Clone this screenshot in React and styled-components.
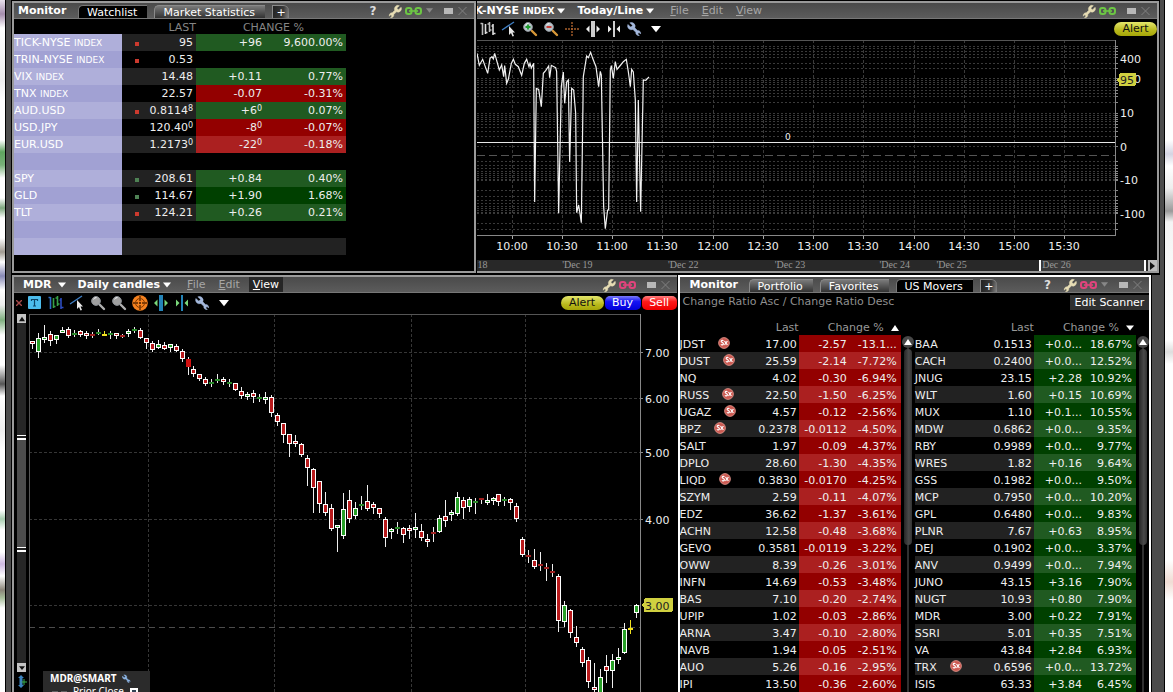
import React, { useState } from "react";
import styled, { createGlobalStyle } from "styled-components";

const GlobalStyle = createGlobalStyle`
  * {
    box-sizing: border-box;
  }
  body {
    margin: 0;
    background: #fff;
    color: #eee;
    font: 11px/14px "DejaVu Sans", Verdana, sans-serif;
  }
  button {
    margin: 0;
    padding: 0;
    border: 0;
    background: none;
    color: inherit;
    font: inherit;
    cursor: pointer;
  }
  svg {
    display: block;
    flex: none;
  }
`;

const Shell = styled.div`
  display: grid;
  grid-template-columns: 5px minmax(0, 1fr) 8px;
  height: 100vh;
  overflow: hidden;
`;

const LeftSliver = styled.div`
  background: linear-gradient(#e8e0ec 0, #a48cac 14px, #fff 28px, #eee 80px, #fff 100px, #fff 140px,
    #5fa45f 152px, #78b078 165px, #fff 178px, #fff 198px, #7da67d 208px, #fff 218px, #fff 238px,
    #a09a90 252px, #fff 262px, #8688b4 276px, #fff 290px, #eee 305px, #7fb07f 320px, #fff 335px,
    #fff 365px, #555 384px, #fff 396px, #eee 430px, #fff 450px, #fff 510px, #a8ceb0 519px,
    #fff 530px, #fff 552px, #cdb8e0 564px, #fff 576px, #8a8478 590px, #a8bf9c 598px, #fff 608px);
`;

const RightSliver = styled.div`
  background: linear-gradient(#fff 0, #fff 140px, #d4d4e2 154px, #fff 166px, #eee 188px, #999 211px,
    #f4f4f4 222px, #fff 340px, #ddd 352px, #fff 364px, #fff 560px, #f0dcd4 582px, #fff 600px);
`;

const Workspace = styled.main`
  display: flex;
  flex-direction: column;
  min-height: 0;
  background: #4c4c4c;
  border: solid #000;
  border-width: 0 1px;
`;

const PanelRow = styled.div`
  display: grid;
  grid-template-columns: ${(props) => props.$columns};
  gap: 1px;
  flex: ${(props) => (props.$fill ? "1" : "none")};
  min-height: 0;
  margin: 0 ${(props) => (props.$fill ? 12 : 4)}px 0 5px;
  padding: ${(props) => (props.$fill ? "0 1px" : "1px 1px 2px")};
  background: #000;
`;

const Panel = styled.section`
  display: flex;
  flex-direction: column;
  min-width: 0;
  min-height: 0;
  overflow: hidden;
  background: #000;
  border: 2px solid ${(props) => (props.$focused ? "#fff" : "#9a9a9a")};
  border-width: ${(props) => props.$edges || "2px"};
`;

const TitleBar = styled.header`
  display: flex;
  align-items: flex-end;
  flex: none;
  height: 16px;
  background: linear-gradient(#4a4a4a, #5c5c5c);
  border-bottom: 1px solid #777;
  white-space: nowrap;
  overflow: hidden;
`;

const Title = styled.h2`
  width: ${(props) => props.$width}px;
  margin: 0;
  padding-left: ${(props) => props.$indent}px;
  font-size: 11px;
  color: #fff;
`;

const Tabs = styled.div`
  display: flex;
  gap: 7px;
  align-items: flex-end;
  margin-bottom: -1px;
`;

const Tab = styled.button`
  height: 14px;
  padding: 0 10px 0 8px;
  border: 1px solid ${(props) => (props.$active ? "#777" : "#8a8a8a")};
  border-width: 1px 0 0 1px;
  border-radius: 5px 0 0 0;
  background: ${(props) => (props.$active ? "#000" : "linear-gradient(#7a7a7a, #2c2c2c)")};
  color: #fff;
  line-height: 14px;
`;

const AddTab = styled(Tab)`
  width: 17px;
  padding: 0;
  border-radius: 0 6px 0 0;
  background: linear-gradient(100deg, #222, #3a3a3a 60%, #888);
`;

const Controls = styled.div`
  display: flex;
  align-items: center;
  height: 15px;
  margin-left: auto;
  padding-right: 7px;
`;

const HelpButton = styled.button`
  margin-right: 12px;
  color: #ddd;
  font-size: 12px;
  font-weight: bold;
`;

const Spacer = styled.span`
  width: ${(props) => props.$size}px;
`;

const MenuButton = styled.button`
  display: flex;
  align-items: center;
  gap: 3px;
  height: 15px;
  padding-top: 1px;
  margin-right: 12px;
  color: #fff;
  font-weight: bold;
`;

const LeadMenu = styled(MenuButton)`
  margin-left: ${(props) => props.$shift}px;
`;

const SmallCaps = styled.small`
  font-size: 9px;
`;

const MenuItem = styled.button`
  height: 15px;
  padding: 1px 4px 0;
  margin-right: 5px;
  background: ${(props) => (props.$open ? "#262626" : "none")};
  color: ${(props) => (props.$open ? "#fff" : "#a6a6a6")};
`;

const Toolbar = styled.div`
  display: flex;
  align-items: center;
  flex: none;
  height: 21px;
  padding-bottom: 2px;
`;

const ToolButton = styled.button`
  display: flex;
  justify-content: center;
  width: ${(props) => props.$width || 21}px;
`;

const OrderButtons = styled.div`
  display: flex;
  gap: 1px;
  margin-left: auto;
`;

const orderColors = {
  alert: ["linear-gradient(#e4e66c, #b9b91c 60%, #a5a508)", "#111"],
  buy: ["linear-gradient(#7c7cf8, #1414f4 40%, #0000d8)", "#fff"],
  sell: ["linear-gradient(#ff8080, #fa1a1a 40%, #f00000)", "#fff"],
};

const OrderButton = styled.button`
  width: ${(props) => props.$width}px;
  height: 14px;
  border-radius: ${(props) => (props.$kind === "alert" ? 7 : 5)}px;
  background: ${(props) => orderColors[props.$kind][0]};
  color: ${(props) => orderColors[props.$kind][1]};
  line-height: 13px;
`;

/* watchlist */

const WatchTable = styled.table`
  width: 332px;
  margin-bottom: 16px;
  border-collapse: collapse;
  table-layout: fixed;

  th {
    height: 15px;
    padding: 2px 0 0;
    color: #858585;
    font-weight: normal;
    line-height: 13px;
    text-align: right;
  }
  th:last-child {
    padding-right: 42px;
  }
  td {
    height: 17px;
    padding: 1px 3px 0 0;
    line-height: 16px;
    text-align: right;
    white-space: nowrap;
  }
`;

const WatchRow = styled.tr`
  background: ${(props) => (props.$odd ? "#000" : "#222")};
`;

const WatchName = styled.td`
  && {
    background: ${(props) => (props.$odd ? "#a1a1d3" : "#afafda")};
    color: #fff;
    text-align: left;
  }
`;

const tones = {
  up: ["#205a21", "#004000"],
  down: ["#ab2020", "#930000"],
};

const MoveCell = styled.td`
  background: ${(props) => (props.$tone ? tones[props.$tone][props.$odd ? 1 : 0] : "none")};
`;

const Tick = styled.span`
  float: left;
  width: 4px;
  height: 4px;
  margin: 7px 0 0 13px;
  background: ${(props) => (props.$up ? "#4e8254" : "#cc3a2e")};
`;

const Pip = styled.sup`
  font-size: 8px;
  line-height: 0;
  vertical-align: 3px;
`;

/* charts */

const ChartBody = styled.div`
  display: flex;
  flex: ${(props) => (props.$fill ? "1" : "none")};
  min-height: 0;
`;

const PlotWrap = styled.div`
  position: relative;
  flex: 1;
  min-width: 0;
`;

const Plot = styled.svg`
  width: 100%;
  height: ${(props) => props.$height};
  font: 11px "DejaVu Sans", Verdana, sans-serif;
  fill: #eee;
  shape-rendering: crispEdges;
`;

const Axis = styled(Plot)`
  width: ${(props) => props.$width}px;
`;

const Timeline = styled.div`
  display: grid;
  grid-template-columns: 85fr 106fr 107fr 105fr 57fr 103fr 105fr 4px 9px;
  flex: none;
  height: 11px;
  background: #282828;
  color: #999;
  font: 10px/10px "Liberation Serif", serif;
  white-space: nowrap;
`;

const TimelineRange = styled.div`
  padding-left: 1px;
  background: #3a3a3a;
  border-left: 2px solid #fff;
`;

const TimelineHandle = styled.button`
  border-left: 2px solid #fff;
`;

const TimelineNext = styled.button`
  display: flex;
  align-items: center;
  justify-content: center;
  background: #bbb;
`;

const RangeColumn = styled.div`
  display: flex;
  flex-direction: column;
  align-items: center;
  width: 15px;
`;

const RangeTrack = styled.div`
  display: flex;
  flex-direction: column;
  flex: 1;
  width: 9px;
  background: #272727;
`;

const RangeEnd = styled.button`
  display: flex;
  align-items: center;
  justify-content: center;
  width: 9px;
  height: 9px;
  background: #c4c4c4;
`;

const RangeGap = styled.div`
  flex: ${(props) => props.$grow};
  background: ${(props) => (props.$selected ? "#4c4c4c" : "none")};
`;

const RangeHandle = styled.button`
  height: 5px;
  border: solid #fff;
  border-width: 1px 0 2px;
  background: #222;
`;

const Legend = styled.div`
  position: absolute;
  left: 14px;
  bottom: 0;
  width: 107px;
  height: 21px;
  overflow: hidden;
  padding: 1px 7px;
  background: #2b2b2b;
  color: #fff;
  font: 10px/13px "Noto Sans", sans-serif;
  white-space: nowrap;
`;

const LegendLine = styled.div`
  display: flex;
  align-items: center;
  gap: 6px;
  font-weight: ${(props) => (props.$strong ? "bold" : "normal")};
`;

const LegendCheck = styled.input`
  appearance: none;
  width: 8px;
  height: 8px;
  margin: 0;
  border: 2px solid #fff;
  background: #345;
`;

/* movers */

const QueryBar = styled.div`
  display: flex;
  justify-content: space-between;
  flex: none;
  height: 27px;
  padding-left: 3px;
  color: #8f8f8f;
  line-height: 17px;
`;

const EditScanner = styled.button`
  width: 79px;
  height: 15px;
  margin-top: 2px;
  background: #303030;
  color: #fff;
  line-height: 15px;
`;

const MoversBody = styled.div`
  display: grid;
  grid-template-columns: minmax(0, 1fr) 14px minmax(0, 1fr) 13px;
  min-height: 0;
`;

const MoversTable = styled.table`
  width: 100%;
  align-self: start;
  border-collapse: collapse;
  table-layout: fixed;

  th {
    height: 15px;
    padding: 1px 0 0;
    color: #999;
    font-weight: normal;
    line-height: 14px;
    text-align: right;
    white-space: nowrap;
  }
  td {
    height: 17px;
    padding: 2px 1px 0 0;
    line-height: 15px;
    text-align: right;
    white-space: nowrap;
  }
  td:nth-child(2) {
    padding-right: 2px;
  }
  td:last-child {
    padding-right: 4px;
  }
`;

const MoversRow = styled.tr`
  background: ${(props) => (props.$odd ? "#222" : "#000")};
`;

const SortHead = styled.span`
  display: flex;
  justify-content: flex-end;
  align-items: center;
  gap: 7px;
  padding-right: 2px;
`;

const SymbolCell = styled.span`
  display: flex;
  align-items: flex-start;
  gap: 13px;
`;

const ScrollColumn = styled.div`
  display: flex;
  flex-direction: column;
  align-items: center;
  padding-top: 16px;
`;

const ScrollUp = styled.button`
  display: flex;
  align-items: center;
  justify-content: center;
  flex: none;
  width: 12px;
  height: 12px;
  border-radius: 6px;
  background: #484848;
`;

const ScrollTrack = styled.div`
  flex: 1;
  width: 8px;
  background: linear-gradient(90deg, transparent 3px, #303030 3px, #303030 5px, transparent 5px);
`;

const ScrollThumb = styled.div`
  height: ${(props) => props.$size}%;
  margin-top: 1px;
  border-radius: 4px;
  background: linear-gradient(90deg, #262626, #4a4a4a 60%, #333);
`;

/* icons */

const Triangle = ({ dir = "down", size = 8, color = "#fff" }) => {
  const points = {
    down: "0,1.5 8,1.5 4,6.5",
    up: "0,7 8,7 4,1",
    right: "2,0 7,4 2,8",
  };
  return (
    <svg width={size} height={size} viewBox="0 0 8 8" aria-hidden="true">
      <polygon points={points[dir]} fill={color} />
    </svg>
  );
};

const wrenchPath =
  "M14.7 6.3a1 1 0 0 0 0 1.4l1.6 1.6a1 1 0 0 0 1.4 0l3.77-3.77a6 6 0 0 1-7.94 7.94l-4.6 4.6 a4.6 4.6 0 0 1-5.6 5.2l2.6-2.6-2.2-2.2-2.4 2.4a4.6 4.6 0 0 1 5-5.8l4.2-4.2a6 6 0 0 1 7.94-7.94z";

const WrenchIcon = ({ color = "#e6dcb4", size = 15, flip }) => (
  <svg width={size} height={size} viewBox="-1 0 24 24" aria-hidden="true">
    <path
      d={wrenchPath}
      fill={color}
      stroke={color}
      strokeWidth="0.8"
      transform={flip ? "translate(22 0) scale(-1 1)" : undefined}
    />
  </svg>
);

const LinkIcon = ({ color }) => (
  <svg width="17" height="8" viewBox="0 0 17 8" fill="none" stroke={color} aria-hidden="true">
    <rect x="1" y="1" width="5.5" height="6" rx="2.2" strokeWidth="2" />
    <rect x="10.5" y="1" width="5.5" height="6" rx="2.2" strokeWidth="2" />
    <path d="M4 4H13" strokeWidth="1.6" />
  </svg>
);

const BarsIcon = ({ colors }) => (
  <svg width="16" height="16" viewBox="0 0 16 16" fill="none" strokeWidth="1.6" aria-hidden="true">
    <path d="M2.5 2V14M0.5 2.5H2.5" stroke={colors[0]} />
    <path d="M5.5 3V13M5.5 11.5H7.5" stroke={colors[1]} />
    <path d="M9.5 1V11M7.5 3H9.5M9.5 9H11.5" stroke={colors[2]} />
    <path d="M13 3V14M11.5 5H13M13 12.5H15.5" stroke={colors[3]} />
  </svg>
);

const TrendIcon = () => (
  <svg width="16" height="16" viewBox="0 0 16 16" aria-hidden="true">
    <path d="M1 9L13 1" stroke="#3f7fc4" strokeWidth="1.4" />
    <path d="M8 5V14L10 12L11.5 15.5L13 15L11.5 11.5H14Z" fill="#e8e8e8" />
  </svg>
);

const LensIcon = ({ sign, lens = "#b8c4cc", signColor, handle = "#d89838" }) => (
  <svg width="16" height="16" viewBox="0 0 16 16" aria-hidden="true">
    <path d="M8.5 8.5L14 14" stroke={handle} strokeWidth="2.4" strokeLinecap="round" />
    <circle cx="6" cy="6" r="4.4" fill={lens} stroke="#8a8f94" />
    <path d="M3.5 4.2A3.4 3.4 0 0 1 6.5 2.6" stroke="#fff" fill="none" />
    {sign && (
      <path d={sign === "plus" ? "M6 3.5V8.5M3.5 6H8.5" : "M3.5 6H8.5"} stroke={signColor} strokeWidth="1.8" />
    )}
  </svg>
);

const CrosshairIcon = ({ filled }) => (
  <svg width="16" height="16" viewBox="0 0 16 16" fill="none" aria-hidden="true">
    {filled && <circle cx="8" cy="8" r="7.8" fill="#f58220" />}
    {filled && <circle cx="8" cy="8" r="4.5" stroke="#7a3600" />}
    <path d="M8 1V15M1 8H15" stroke={filled ? "#5e2a00" : "#a8602c"} strokeWidth="1.4" strokeDasharray="2 1" />
  </svg>
);

const SplitIcon = ({ bar, arrow, inward }) => (
  <svg width="16" height="16" viewBox="0 0 16 16" aria-hidden="true">
    <rect x={inward ? 7 : 6} y="0" width={inward ? 2 : 4} height="16" fill={bar} />
    <path
      d={inward ? "M2 4.5L5.5 8L2 11.5ZM14 4.5L10.5 8L14 11.5Z" : "M4.5 4.5L1 8L4.5 11.5ZM11.5 4.5L15 8L11.5 11.5Z"}
      fill={arrow}
    />
  </svg>
);

const TextIcon = () => (
  <svg width="13" height="13" viewBox="0 0 13 13" aria-hidden="true">
    <rect width="13" height="13" rx="1" fill="#4cbcec" />
    <path d="M3.5 5V3.5H9.5V5M6.5 3.5V10M5 10H8" fill="none" stroke="#0c4468" strokeWidth="1.2" />
  </svg>
);

const ShortBadge = () => (
  <svg width="12" height="12" viewBox="0 0 12 12" aria-label="Short sale restricted">
    <circle cx="6" cy="6" r="5.4" fill="#cc5a52" stroke="#e89a90" strokeWidth="0.8" />
    <path
      d="M5.4 3.8C4.6 3 3 3.4 3.2 4.5C3.4 5.6 5.4 5.4 5.4 6.7C5.4 8 3.6 8.2 2.9 7.4M6.5 4L9.4 8M9.4 4L6.5 8"
      fill="none"
      stroke="#fff"
      strokeWidth="1.2"
    />
  </svg>
);

const WindowControls = ({ link, help, menu }) => (
  <Controls>
    {help && <HelpButton aria-label="Help">?</HelpButton>}
    <button aria-label="Configure">
      <WrenchIcon size={14} />
    </button>
    <Spacer $size={3} />
    <button aria-label="Link group">
      <LinkIcon color={link} />
    </button>
    {menu && <Spacer $size={4} />}
    {menu && <Triangle color="#888" size={7} />}
    <Spacer $size={11} />
    <button aria-label="Restore">
      <svg width="9" height="6">
        <rect width="9" height="6" fill="#b8b8b8" />
      </svg>
    </button>
    <Spacer $size={5} />
    <button aria-label="Close">
      <svg width="9" height="8" viewBox="0 0 9 8">
        <path d="M0.5 0L8.5 8M8.5 0L0.5 8" stroke="#808080" />
      </svg>
    </button>
  </Controls>
);

const MenuBar = ({ open }) =>
  ["File", "Edit", "View"].map((label) => (
    <MenuItem key={label} $open={open === label}>
      <u>{label[0]}</u>
      {label.slice(1)}
    </MenuItem>
  ));

const watchlist = [
  { name: "TICK-NYSE", index: true, tick: "down", last: "95", change: "+96", pct: "9,600.00%", tone: "up" },
  { name: "TRIN-NYSE", index: true, tick: "down", last: "0.53" },
  { name: "VIX", index: true, last: "14.48", change: "+0.11", pct: "0.77%", tone: "up" },
  { name: "TNX", index: true, last: "22.57", change: "-0.07", pct: "-0.31%", tone: "down" },
  { name: "AUD.USD", tick: "down", last: "0.8114", lastPip: "8", change: "+6", pip: "0", pct: "0.07%", tone: "up" },
  { name: "USD.JPY", last: "120.40", lastPip: "0", change: "-8", pip: "0", pct: "-0.07%", tone: "down" },
  { name: "EUR.USD", last: "1.2173", lastPip: "0", change: "-22", pip: "0", pct: "-0.18%", tone: "down" },
  {},
  { name: "SPY", tick: "up", last: "208.61", change: "+0.84", pct: "0.40%", tone: "up" },
  { name: "GLD", tick: "up", last: "114.67", change: "+1.90", pct: "1.68%", tone: "up" },
  { name: "TLT", tick: "down", last: "124.21", change: "+0.26", pct: "0.21%", tone: "up" },
  {},
  {},
];

// symbol, last, change, percent, short restricted
const losers = [
  ["JDST", "17.00", "-2.57", "-13.1...", true],
  ["DUST", "25.59", "-2.14", "-7.72%", true],
  ["NQ", "4.02", "-0.30", "-6.94%"],
  ["RUSS", "22.50", "-1.50", "-6.25%", true],
  ["UGAZ", "4.57", "-0.12", "-2.56%", true],
  ["BPZ", "0.2378", "-0.0112", "-4.50%", true],
  ["SALT", "1.97", "-0.09", "-4.37%"],
  ["DPLO", "28.60", "-1.30", "-4.35%"],
  ["LIQD", "0.3830", "-0.0170", "-4.25%", true],
  ["SZYM", "2.59", "-0.11", "-4.07%"],
  ["EDZ", "36.62", "-1.37", "-3.61%"],
  ["ACHN", "12.58", "-0.48", "-3.68%"],
  ["GEVO", "0.3581", "-0.0119", "-3.22%"],
  ["OWW", "8.39", "-0.26", "-3.01%"],
  ["INFN", "14.69", "-0.53", "-3.48%"],
  ["BAS", "7.10", "-0.20", "-2.74%"],
  ["UPIP", "1.02", "-0.03", "-2.86%"],
  ["ARNA", "3.47", "-0.10", "-2.80%"],
  ["NAVB", "1.94", "-0.05", "-2.51%"],
  ["AUO", "5.26", "-0.16", "-2.95%"],
  ["IPI", "13.50", "-0.36", "-2.60%"],
];

const gainers = [
  ["BAA", "0.1513", "+0.0...", "18.67%"],
  ["CACH", "0.2400", "+0.0...", "12.52%"],
  ["JNUG", "23.15", "+2.28", "10.92%"],
  ["WLT", "1.60", "+0.15", "10.69%"],
  ["MUX", "1.10", "+0.1...", "10.55%"],
  ["MDW", "0.6862", "+0.0...", "9.35%"],
  ["RBY", "0.9989", "+0.0...", "9.77%"],
  ["WRES", "1.82", "+0.16", "9.64%"],
  ["GSS", "0.1982", "+0.0...", "9.50%"],
  ["MCP", "0.7950", "+0.0...", "10.20%"],
  ["GPL", "0.6480", "+0.0...", "9.83%"],
  ["PLNR", "7.67", "+0.63", "8.95%"],
  ["DEJ", "0.1902", "+0.0...", "3.37%"],
  ["ANV", "0.9499", "+0.0...", "7.94%"],
  ["JUNO", "43.15", "+3.16", "7.90%"],
  ["NUGT", "10.93", "+0.80", "7.90%"],
  ["MDR", "3.00", "+0.22", "7.91%"],
  ["SSRI", "5.01", "+0.35", "7.51%"],
  ["VA", "43.84", "+2.84", "6.93%"],
  ["TRX", "0.6596", "+0.0...", "13.72%", true],
  ["ISIS", "63.33", "+3.84", "6.45%"],
];

// tick index line, three units to a pixel
const tickLine =
  "0,40 7,76 17,58 32,100 39,55 45,50 49,57 53,40 67,90 74,75 80,110 83,77 89,130 94,118 103,70 109,58 115,73 124,80 134,106 142,70 149,58 156,80 159,70 163,84 170,70 173,486 178,145 185,148 193,200 199,100 206,92 215,78 218,113 223,76 236,83 239,95 245,520 253,140 259,96 263,190 269,126 274,120 278,366 284,145 290,150 296,220 299,518 305,495 313,548 319,110 329,48 334,53 341,37 347,55 357,80 365,140 370,94 373,105 380,500 385,566 392,510 395,510 400,90 403,77 409,115 415,65 420,88 431,75 439,65 448,58 454,95 460,140 464,88 469,96 475,180 479,486 484,180 491,515 499,120 506,121 516,111";

const tickLevels = [
  6, 8, 11, 14, 17, 23, 28, 38, 40, 42, 44, 47, 50, 53, 56, 62, 73, 75, 77, 79, 81, 84, 87, 91, 96, 106,
  121, 125, 128, 131, 133, 135, 137, 139, 140, 150, 156, 160, 163, 166, 168, 170, 172, 173, 183, 189,
];

const hours = [
  ["10:00", 35],
  ["10:30", 85],
  ["11:00", 135],
  ["11:30", 185],
  ["12:00", 236],
  ["12:30", 286],
  ["13:00", 336],
  ["13:30", 386],
  ["14:00", 437],
  ["14:30", 487],
  ["15:00", 537],
  ["15:30", 587],
];

// kind, wick top, body top, body bottom, wick bottom
// r/g are hollow bodies, R/G/Y are dashes, F is a solid fall
const candles = [
  ["r", 214, 214, 220, 238], ["g", 190, 205, 245, 263], ["g", 166, 200, 208, 218], ["r", 184, 193, 212, 227],
  ["g", 196, 196, 209, 223], ["g", 172, 179, 185, 190], ["r", 172, 178, 197, 203], ["G", 181, 188, 194, 200],
  ["r", 180, 184, 194, 200], ["r", 184, 190, 197, 208], ["R", 185, 192, 198, 203], ["G", 178, 185, 191, 196],
  ["Y", 184, 191, 197, 198], ["G", 184, 188, 194, 208], ["r", 190, 190, 197, 208], ["R", 192, 195, 201, 204],
  ["g", 178, 184, 193, 200], ["G", 172, 177, 183, 188], ["r", 175, 181, 204, 208], ["r", 205, 205, 220, 238],
  ["r", 214, 220, 240, 245], ["g", 211, 223, 233, 236], ["r", 217, 226, 236, 241], ["g", 223, 223, 235, 245],
  ["r", 222, 229, 242, 245], ["r", 238, 244, 266, 275], ["F", 262, 268, 290, 315], ["r", 289, 298, 311, 322],
  ["r", 313, 313, 326, 332], ["r", 322, 328, 341, 347], ["G", 328, 337, 343, 350], ["G", 312, 326, 332, 338],
  ["r", 320, 328, 335, 344], ["G", 328, 337, 343, 352], ["r", 340, 340, 359, 362], ["r", 350, 364, 377, 386],
  ["g", 365, 371, 376, 389], ["r", 361, 370, 380, 398], ["G", 373, 381, 387, 395], ["g", 367, 382, 391, 402],
  ["r", 376, 382, 428, 440], ["r", 430, 436, 455, 467], ["r", 460, 460, 494, 518], ["r", 493, 493, 521, 560],
  ["r", 496, 514, 520, 532], ["r", 520, 523, 556, 560], ["r", 556, 565, 594, 648], ["r", 593, 598, 653, 728],
  ["r", 632, 632, 701, 728], ["r", 666, 703, 728, 737], ["r", 702, 715, 776, 782], ["g", 765, 765, 773, 845],
  ["g", 670, 718, 797, 806], ["r", 660, 691, 746, 760], ["g", 697, 715, 737, 746], ["G", 678, 701, 707, 720],
  ["r", 645, 694, 718, 722], ["r", 697, 702, 715, 733], ["r", 715, 715, 731, 743], ["r", 742, 748, 805, 830],
  ["g", 773, 778, 785, 808], ["G", 757, 771, 777, 793], ["r", 772, 775, 794, 818], ["r", 766, 775, 781, 808],
  ["g", 730, 772, 781, 805], ["r", 763, 784, 805, 814], ["r", 793, 806, 817, 830], ["R", 770, 785, 791, 815],
  ["g", 736, 745, 787, 790], ["r", 690, 739, 754, 770], ["g", 721, 727, 736, 752], ["g", 667, 682, 733, 737],
  ["r", 682, 691, 715, 746], ["g", 680, 688, 712, 725], ["G", 685, 693, 699, 731], ["R", 684, 684, 690, 702],
  ["g", 672, 689, 695, 704], ["g", 680, 685, 692, 704], ["r", 673, 673, 695, 707], ["G", 680, 687, 693, 707],
  ["r", 684, 686, 700, 721], ["r", 700, 709, 746, 757], ["r", 802, 808, 854, 860], ["R", 841, 855, 861, 878],
  ["r", 837, 871, 890, 896], ["R", 847, 882, 888, 902], ["R", 880, 891, 897, 932], ["R", 883, 903, 909, 920],
  ["r", 912, 919, 1052, 1085], ["g", 994, 1006, 1057, 1070], ["r", 1016, 1021, 1090, 1103],
  ["r", 1069, 1102, 1120, 1130], ["r", 1132, 1138, 1180, 1192], ["r", 1160, 1171, 1237, 1253],
  ["r", 1180, 1252, 1261, 1280], ["g", 1198, 1222, 1280, 1280], ["r", 1156, 1189, 1204, 1240],
  ["g", 1153, 1171, 1204, 1253], ["g", 1135, 1160, 1168, 1183], ["g", 1060, 1078, 1150, 1153],
  ["Y", 1050, 1074, 1080, 1093], ["g", 1002, 1006, 1028, 1045],
];

const candleColors = { r: "#b81a1c", g: "#28a028", R: "#a02020", G: "#2a8a2a", Y: "#f0e020", F: "#d01010" };

const toY = (v) => Math.round(v / 3) - 44;

function Candle({ i, data }) {
  const [kind, high, top, bottom, low] = data;
  const x = 3 + i * 6 - (i > 26 ? 1 : 0) - (i > 77 ? 1 : 0);
  const y = toY(top);
  const hollow = kind === "r" || kind === "g";
  const height = Math.max(toY(bottom) - y, hollow ? 3 : 2);
  const color = candleColors[kind];
  return (
    <g>
      <rect x={x} y={toY(high)} width="1" height={toY(low) - toY(high)} fill={kind === "Y" ? color : "#eee"} />
      <rect x={x - 2} y={y} width="5" height={height} fill={hollow ? "#fff" : color} />
      {hollow && <rect x={x - 1} y={y + 1} width="3" height={height - 2} fill={color} />}
    </g>
  );
}

function WatchlistPanel() {
  const [tab, setTab] = useState("Watchlist");
  return (
    <Panel>
      <TitleBar>
        <Title $width={64} $indent={4}>Monitor</Title>
        <Tabs>
          {["Watchlist", "Market Statistics"].map((name) => (
            <Tab key={name} $active={tab === name} onClick={() => setTab(name)}>{name}</Tab>
          ))}
          <AddTab aria-label="Add tab">+</AddTab>
        </Tabs>
        <WindowControls link="#6cc644" help menu />
      </TitleBar>
      <WatchTable>
        <colgroup>
          <col width="108" />
          <col width="74" />
          <col width="69" />
          <col width="81" />
        </colgroup>
        <thead>
          <tr>
            <th />
            <th>LAST</th>
            <th colSpan="2">CHANGE %</th>
          </tr>
        </thead>
        <tbody>
          {watchlist.map((row, i) => {
            const odd = i % 2 === 1;
            return (
              <WatchRow key={i} $odd={odd}>
                <WatchName $odd={odd}>
                  {row.name} {row.index && <SmallCaps>INDEX</SmallCaps>}
                </WatchName>
                <td>
                  {row.tick && <Tick $up={row.tick === "up"} />}
                  {row.last}
                  {row.lastPip && <Pip>{row.lastPip}</Pip>}
                </td>
                <MoveCell $tone={row.tone} $odd={odd}>
                  {row.change}
                  {row.pip && <Pip>{row.pip}</Pip>}
                </MoveCell>
                <MoveCell $tone={row.tone} $odd={odd}>{row.pct}</MoveCell>
              </WatchRow>
            );
          })}
        </tbody>
      </WatchTable>
    </Panel>
  );
}

function TickPanel() {
  return (
    <Panel $edges="2px 2px 2px 0">
      <TitleBar>
        <LeadMenu $shift={-3}>
          <span>K-NYSE <SmallCaps>INDEX</SmallCaps></span>
          <Triangle />
        </LeadMenu>
        <MenuButton>
          Today/Line
          <Triangle />
        </MenuButton>
        <MenuBar />
        <WindowControls link="#6cc644" />
      </TitleBar>
      <Toolbar>
        <ToolButton aria-label="Bars"><BarsIcon colors={["#bbb", "#ddd", "#bbb", "#ddd"]} /></ToolButton>
        <ToolButton aria-label="Trendline"><TrendIcon /></ToolButton>
        <ToolButton aria-label="Zoom in"><LensIcon sign="plus" signColor="#1c9c2c" /></ToolButton>
        <ToolButton aria-label="Zoom out"><LensIcon sign="minus" signColor="#c83028" /></ToolButton>
        <ToolButton aria-label="Crosshair"><CrosshairIcon /></ToolButton>
        <ToolButton aria-label="Widen"><SplitIcon bar="#ccc" arrow="#eee" /></ToolButton>
        <ToolButton aria-label="Narrow"><SplitIcon bar="#ccc" arrow="#eee" inward /></ToolButton>
        <ToolButton aria-label="Settings"><WrenchIcon color="#a4b8dc" flip /></ToolButton>
        <ToolButton aria-label="More"><Triangle size={10} dir="down" /></ToolButton>
        <OrderButtons>
          <OrderButton $kind="alert" $width={43}>Alert</OrderButton>
        </OrderButtons>
      </Toolbar>
      <ChartBody>
        <PlotWrap>
          <Plot $height="220px">
            {tickLevels.map((y) => (
              <line key={y} x1="0" x2="100%" y1={y + 0.5} y2={y + 0.5} stroke="#3a3a3a" strokeDasharray="2 2" />
            ))}
            {hours.map(([label, x]) => (
              <g key={label}>
                <line x1={x + 0.5} x2={x + 0.5} y1="0" y2="195" stroke="#3a3a3a" strokeDasharray="3 2" />
                <line x1={x + 0.5} x2={x + 0.5} y1="195" y2="199" stroke="#aaa" />
                <text x={x} y="210" textAnchor="middle">{label}</text>
              </g>
            ))}
            <line x1="0" x2="100%" y1="0.5" y2="0.5" stroke="#555" />
            <line x1="0" x2="100%" y1="115.5" y2="115.5" stroke="#555" strokeDasharray="8 4" />
            <line x1="0" x2="100%" y1="102.5" y2="102.5" stroke="#e8e8e8" />
            <line x1="0" x2="100%" y1="195.5" y2="195.5" stroke="#888" />
            <text x="308" y="100" fontSize="9">0</text>
            <polyline
              points={tickLine}
              transform="scale(0.3333)"
              fill="none"
              stroke="#f2f2f2"
              strokeWidth="3.6"
              shapeRendering="auto"
            />
          </Plot>
        </PlotWrap>
        <Axis $width={42} $height="220px">
          <line x1="0.5" x2="0.5" y1="0" y2="196" stroke="#888" />
          {tickLevels.map((y) => (
            <line key={y} x1="0" x2="3" y1={y + 0.5} y2={y + 0.5} stroke="#888" />
          ))}
          {[["400", 23], ["100", 43], ["10", 77], ["0", 111], ["-10", 144], ["-100", 178]].map(([label, y]) => (
            <text key={label} x="5" y={y}>{label}</text>
          ))}
          <path d="M1 40L4 37V35Q4 33 6 33H19Q21 33 21 35V44Q21 46 19 46H6Q4 46 4 44V43Z" fill="#d0d040" />
          <text x="5" y="44" fill="#222">95</text>
        </Axis>
      </ChartBody>
      <Timeline>
        <span>18</span>
        <span>'Dec 19</span>
        <span>'Dec 22</span>
        <span>'Dec 23</span>
        <span>'Dec 24</span>
        <span>'Dec 25</span>
        <TimelineRange>Dec 26</TimelineRange>
        <TimelineHandle aria-label="Range end" />
        <TimelineNext aria-label="Scroll right"><Triangle dir="right" color="#111" /></TimelineNext>
      </Timeline>
    </Panel>
  );
}

function CandlePanel() {
  return (
    <Panel $edges="2px 0 0 2px">
      <TitleBar>
        <LeadMenu $shift={9}>
          MDR
          <Spacer />
          <Triangle />
        </LeadMenu>
        <MenuButton>
          Daily candles
          <Triangle />
        </MenuButton>
        <MenuBar open="View" />
        <WindowControls link="#e0447c" />
      </TitleBar>
      <Toolbar>
        <ToolButton aria-label="Close toolbar" $width={10}>
          <svg width="6" height="6" viewBox="0 0 6 6">
            <path d="M0 0L6 6M6 0L0 6" stroke="#a84848" strokeWidth="1.4" />
          </svg>
        </ToolButton>
        <ToolButton aria-label="Text"><TextIcon /></ToolButton>
        <ToolButton aria-label="Bars"><BarsIcon colors={["#2c6cc4", "#36a048", "#36a048", "#2c4cc0"]} /></ToolButton>
        <ToolButton aria-label="Trendline"><TrendIcon /></ToolButton>
        <ToolButton aria-label="Zoom in"><LensIcon lens="#a0a0a0" handle="#b0b0b0" /></ToolButton>
        <ToolButton aria-label="Zoom out"><LensIcon lens="#a0a0a0" handle="#b0b0b0" /></ToolButton>
        <ToolButton aria-label="Crosshair"><CrosshairIcon filled /></ToolButton>
        <ToolButton aria-label="Widen"><SplitIcon bar="#2484b8" arrow="#7ad87a" /></ToolButton>
        <ToolButton aria-label="Narrow"><SplitIcon bar="#2484b8" arrow="#7ad87a" inward /></ToolButton>
        <ToolButton aria-label="Settings"><WrenchIcon color="#a4b8dc" flip /></ToolButton>
        <ToolButton aria-label="More"><Triangle size={10} /></ToolButton>
        <OrderButtons>
          <OrderButton $kind="alert" $width={43}>Alert</OrderButton>
          <OrderButton $kind="buy" $width={36}>Buy</OrderButton>
          <OrderButton $kind="sell" $width={35}>Sell</OrderButton>
        </OrderButtons>
      </Toolbar>
      <ChartBody $fill>
        <RangeColumn>
          <RangeTrack>
            <RangeEnd aria-label="Scale up"><Triangle dir="up" size={6} color="#111" /></RangeEnd>
            <RangeGap $grow={112} />
            <RangeHandle aria-label="Upper bound" />
            <RangeGap $grow={107} $selected />
            <RangeHandle aria-label="Lower bound" />
            <RangeGap $grow={111} />
            <RangeEnd aria-label="Scale down"><Triangle size={6} color="#111" /></RangeEnd>
          </RangeTrack>
          <svg width="10" height="20" viewBox="0 0 10 20">
            <path d="M4 3L7 6H5.5V13H7L4 16L1 13H2.5V6H1Z" fill="#3c84c0" />
            <path d="M7 7V13M4.5 10H10" stroke="#3cb050" />
          </svg>
        </RangeColumn>
        <PlotWrap>
          <Plot $height="100%">
            {[38, 84, 138, 205, 291].map((y) => (
              <line key={y} x1="0" x2="100%" y1={y + 0.5} y2={y + 0.5} stroke="#363636" strokeDasharray="3 2" />
            ))}
            {[119, 245, 382, 496].map((x) => (
              <line key={x} x1={x + 0.5} x2={x + 0.5} y1="0" y2="100%" stroke="#363636" strokeDasharray="3 2" />
            ))}
            <line x1="0" x2="100%" y1="313.5" y2="313.5" stroke="#4c4c4c" strokeDasharray="6 4" />
            <line x1="0" x2="100%" y1="0.5" y2="0.5" stroke="#555" />
            <line x1="0.5" x2="0.5" y1="0" y2="100%" stroke="#555" />
            {candles.map((data, i) => (
              <Candle key={i} i={i} data={data} />
            ))}
          </Plot>
          <Legend>
            <LegendLine $strong>
              MDR@SMART
              <WrenchIcon size={9} color="#8cb4e4" flip />
            </LegendLine>
            <LegendLine as="label">
              <svg width="17" height="2">
                <path d="M2 1H8M11 1H17" stroke="#999" />
              </svg>
              Prior Close
              <LegendCheck type="checkbox" defaultChecked />
            </LegendLine>
          </Legend>
        </PlotWrap>
        <Axis $width={37} $height="100%">
          <line x1="0.5" x2="0.5" y1="0" y2="100%" stroke="#888" />
          {[["7.00", 38], ["6.00", 84], ["5.00", 138], ["4.00", 205]].map(([label, y]) => (
            <g key={label}>
              <line x1="0" x2="3" y1={y + 0.5} y2={y + 0.5} stroke="#888" />
              <text x="5" y={y + 5}>{label}</text>
            </g>
          ))}
          <path d="M1 291L4 288V286Q4 284 6 284H31Q33 284 33 286V296Q33 298 31 298H6Q4 298 4 296V294Z" fill="#d0d040" />
          <text x="5" y="296" fill="#222">3.00</text>
        </Axis>
      </ChartBody>
    </Panel>
  );
}

function Movers({ rows, tone, sort }) {
  return (
    <>
      <MoversTable>
        <colgroup>
          <col width="61" />
          <col width="58" />
          <col width="49" />
          <col width="53" />
        </colgroup>
        <thead>
          <tr>
            <th />
            <th>Last</th>
            <th colSpan="2">
              <SortHead>Change % <Triangle dir={sort} /></SortHead>
            </th>
          </tr>
        </thead>
        <tbody>
          {rows.map(([symbol, last, change, pct, restricted], i) => (
            <MoversRow key={symbol} $odd={i % 2 === 1}>
              <td>
                <SymbolCell>
                  {symbol}
                  {restricted && <ShortBadge />}
                </SymbolCell>
              </td>
              <td>{last}</td>
              <MoveCell $tone={tone} $odd={i % 2 === 0}>{change}</MoveCell>
              <MoveCell $tone={tone} $odd={i % 2 === 0}>{pct}</MoveCell>
            </MoversRow>
          ))}
        </tbody>
      </MoversTable>
      <ScrollColumn>
        <ScrollUp aria-label="Scroll up"><Triangle dir="up" /></ScrollUp>
        <ScrollTrack>
          <ScrollThumb $size={57} />
        </ScrollTrack>
      </ScrollColumn>
    </>
  );
}

function MoversPanel() {
  const [tab, setTab] = useState("US Movers");
  return (
    <Panel $focused $edges="2px 2px 0 2px">
      <TitleBar>
        <Title $width={69} $indent={10}>Monitor</Title>
        <Tabs>
          {["Portfolio", "Favorites", "US Movers"].map((name) => (
            <Tab key={name} $active={tab === name} onClick={() => setTab(name)}>{name}</Tab>
          ))}
          <AddTab aria-label="Add tab">+</AddTab>
        </Tabs>
        <WindowControls link="#e0447c" help menu />
      </TitleBar>
      <QueryBar>
        Change Ratio Asc / Change Ratio Desc
        <EditScanner>Edit Scanner</EditScanner>
      </QueryBar>
      <MoversBody>
        <Movers rows={losers} tone="down" sort="up" />
        <Movers rows={gainers} tone="up" sort="down" />
      </MoversBody>
    </Panel>
  );
}

export default function App() {
  return (
    <>
      <GlobalStyle />
      <Shell>
        <LeftSliver />
        <Workspace>
          <PanelRow $columns="minmax(0, 464fr) minmax(0, 681fr)">
            <WatchlistPanel />
            <TickPanel />
          </PanelRow>
          <PanelRow $fill $columns="minmax(0, 664fr) minmax(0, 473fr)">
            <CandlePanel />
            <MoversPanel />
          </PanelRow>
        </Workspace>
        <RightSliver />
      </Shell>
    </>
  );
}
